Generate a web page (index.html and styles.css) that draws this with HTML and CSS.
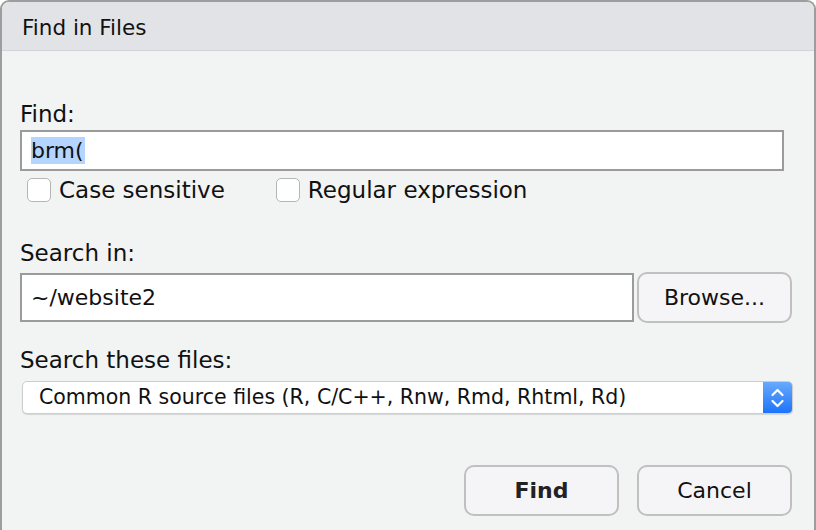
FILE: index.html
```html
<!DOCTYPE html>
<html>
<head>
<meta charset="utf-8">
<title>Find in Files</title>
<link rel="stylesheet" href="styles.css">
</head>
<body>
<div class="dialog">
  <div class="titlebar">Find in Files</div>
  <div class="content">
    <div class="label label-find">Find:</div>
    <div class="textbox find-box"><span class="sel">brm(</span></div>
    <div class="checks">
      <label class="check"><span class="box"></span>Case sensitive</label>
      <label class="check check-regex"><span class="box"></span>Regular expression</label>
    </div>
    <div class="label label-search">Search in:</div>
    <div class="row">
      <div class="textbox search-box">~/website2</div>
      <div class="btn browse">Browse...</div>
    </div>
    <div class="label label-files">Search these files:</div>
    <div class="select">
      <span class="select-text">Common R source files (R, C/C++, Rnw, Rmd, Rhtml, Rd)</span>
      <span class="stepper">
        <svg width="29" height="33" viewBox="0 0 29 33">
          <path d="M9.5 14 L14.5 9 L19.5 14" fill="none" stroke="#fff" stroke-width="2.2" stroke-linecap="round" stroke-linejoin="round"/>
          <path d="M9.5 20 L14.5 25 L19.5 20" fill="none" stroke="#fff" stroke-width="2.2" stroke-linecap="round" stroke-linejoin="round"/>
        </svg>
      </span>
    </div>
    <div class="actions">
      <div class="btn action default">Find</div>
      <div class="btn action">Cancel</div>
    </div>
  </div>
</div>
</body>
</html>
```

FILE: styles.css
```css
html, body {
  margin: 0;
  padding: 0;
  background: #ffffff;
}
body {
  width: 816px;
  height: 530px;
  overflow: hidden;
  font-family: "DejaVu Sans", "Liberation Sans", sans-serif;
  color: #111;
}
.dialog {
  box-sizing: border-box;
  width: 816px;
  height: 530px;
  border: 2px solid #9d9d9d;
  border-bottom: none;
  border-radius: 9px 9px 0 0;
  background: #f2f3f3;
  overflow: hidden;
}
.titlebar {
  height: 48px;
  line-height: 52px;
  padding-left: 20px;
  font-size: 21.5px;
  background: #e2e3e6;
  border-bottom: 1px solid #d2d3d5;
  color: #111;
}
.content {
  padding: 0 0 0 18px;
}
.label {
  font-size: 23px;
  line-height: 28px;
}
.label-find { margin-top: 49px; }
.textbox {
  box-sizing: border-box;
  background: #fff;
  border: 2px solid #9b9b9b;
  font-size: 22px;
  padding-left: 9px;
}
.find-box {
  width: 764px;
  height: 41px;
  line-height: 37px;
  margin-top: 2px;
}
.sel {
  background: #b4d5fe;
  display: inline-block;
  line-height: 27px;
  padding-right: 1px;
}
.checks {
  display: flex;
  margin-top: 5px;
  height: 28px;
  align-items: center;
}
.check {
  display: flex;
  align-items: center;
  font-size: 23px;
  margin-left: 7px;
}
.check-regex { margin-left: 51px; }
.box {
  box-sizing: border-box;
  width: 24px;
  height: 24px;
  border: 1.5px solid #b5b5b5;
  border-radius: 5px;
  background: #fff;
  margin-right: 8px;
}
.label-search { margin-top: 35px; }
.row {
  display: flex;
  align-items: center;
  margin-top: 5px;
  gap: 3px;
}
.search-box {
  width: 614px;
  height: 49px;
  line-height: 45px;
}
.btn {
  box-sizing: border-box;
  background: #f5f5f7;
  border: 2px solid #c0c0c0;
  border-radius: 10px;
  font-size: 22px;
  text-align: center;
  color: #111;
}
.browse {
  width: 155px;
  height: 51px;
  line-height: 47px;
}
.label-files { margin-top: 23px; }
.select {
  box-sizing: border-box;
  display: flex;
  width: 771px;
  height: 33px;
  margin-top: 7px;
  margin-left: 2px;
  background: #fff;
  border: 1px solid #cdcdcd;
  border-radius: 5px;
  box-shadow: 0 1px 1px rgba(0,0,0,0.12);
  overflow: hidden;
}
.select-text {
  flex: 1;
  font-size: 20.5px;
  line-height: 31px;
  padding-left: 16px;
}
.stepper {
  width: 29px;
  height: 33px;
  margin-top: -1px;
  background: linear-gradient(#6aabfc, #1a72fb);
  display: block;
}
.stepper svg { display: block; }
.actions {
  display: flex;
  justify-content: flex-end;
  gap: 18px;
  margin-top: 51px;
  padding-right: 22px;
}
.action {
  width: 155px;
  height: 51px;
  line-height: 47px;
}
.default {
  font-weight: bold;
  color: #222;
}
```
